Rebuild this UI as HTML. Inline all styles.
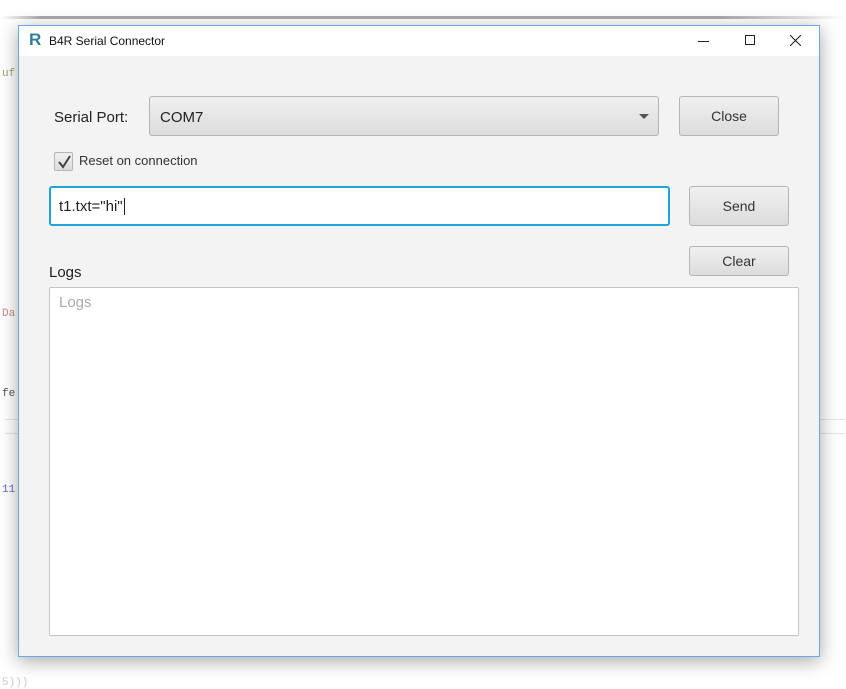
<!DOCTYPE html>
<html><head><meta charset="utf-8"><style>
*{margin:0;padding:0;box-sizing:border-box}
body{width:846px;height:688px;background:#fff;position:relative;overflow:hidden;font-family:"Segoe UI","Liberation Sans",sans-serif;color:#333}
.a{position:absolute}
.btn{position:absolute;border:1px solid #b5b5b5;border-radius:3px;background:linear-gradient(#f0f0f0,#dcdcdc);font-size:14px;text-align:center;color:#333}
.bg{font-family:"Liberation Mono",monospace;font-size:11px}
</style></head><body>
<div class="a" style="left:0;top:16px;width:846px;height:3px;background:linear-gradient(90deg,#fff,#aaa 5%,#aaa 85%,#fff)"></div>
<div class="a bg" style="left:2px;top:68px;color:#9a6">uf</div>
<div class="a bg" style="left:2px;top:308px;color:#c88">Da</div>
<div class="a bg" style="left:2px;top:388px;color:#555">fe</div>
<div class="a bg" style="left:2px;top:484px;color:#66c">11</div>
<div class="a bg" style="left:2px;top:677px;color:#ccc">5)))</div>
<div class="a" style="left:5px;top:419px;width:840px;height:1px;background:#e6e6e6"></div>
<div class="a" style="left:5px;top:433px;width:840px;height:1px;background:#e6e6e6"></div>
<div class="a" style="left:18px;top:25px;width:802px;height:632px;background:#f3f3f3;border:1px solid #6aa8e8;box-shadow:0 4px 18px rgba(0,0,0,.35)">
 <div class="a" style="left:0;top:0;width:800px;height:30px;background:#fff"></div>
 <div class="a" style="left:10px;top:4px;font:bold 17px 'Liberation Sans',sans-serif;color:#2e7d9a">R</div>
 <div class="a" style="left:30px;top:8px;font-size:12px;color:#111">B4R Serial Connector</div>
 <div class="a" style="left:679px;top:15px;width:11px;height:1px;background:#222"></div>
 <div class="a" style="left:726px;top:9px;width:10px;height:10px;border:1px solid #222"></div>
 <svg class="a" style="left:771px;top:9px" width="11" height="11"><path d="M0 0L11 11M11 0L0 11" stroke="#222" stroke-width="1.1"/></svg>
 <div class="a" style="left:35px;top:83px;font-size:15px;color:#222">Serial Port:</div>
 <div class="btn" style="left:130px;top:70px;width:510px;height:40px;text-align:left;padding:12px 0 0 10px;font-size:15px;color:#222">COM7</div>
 <div class="a" style="left:620px;top:88px;border:5px solid transparent;border-top:5px solid #555;border-bottom:0"></div>
 <div class="btn" style="left:660px;top:70px;width:100px;height:40px;line-height:38px">Close</div>
 <div class="btn" style="left:35px;top:126px;width:19px;height:19px;border-radius:2px"></div>
 <svg class="a" style="left:37px;top:128px" width="16" height="16"><path d="M3 8L7 13L14 2" stroke="#444" stroke-width="2" fill="none"/></svg>
 <div class="a" style="left:60px;top:127px;font-size:13px">Reset on connection</div>
 <div class="a" style="left:30px;top:160px;width:621px;height:40px;background:#fff;border:2px solid #1fa3d9;border-radius:3px;font-size:15px;padding:10px 0 0 8px;color:#222">t1.txt="hi"<span style="border-left:1px solid #222;margin-left:1px"></span></div>
 <div class="btn" style="left:670px;top:160px;width:100px;height:40px;line-height:38px">Send</div>
 <div class="btn" style="left:670px;top:220px;width:100px;height:30px;line-height:28px">Clear</div>
 <div class="a" style="left:30px;top:238px;font-size:15px;color:#222">Logs</div>
 <div class="a" style="left:30px;top:261px;width:750px;height:349px;background:#fff;border:1px solid #c4c4c4;border-radius:2px"></div>
 <div class="a" style="left:40px;top:268px;font-size:15px;color:#aaa">Logs</div>
</div>
</body></html>
